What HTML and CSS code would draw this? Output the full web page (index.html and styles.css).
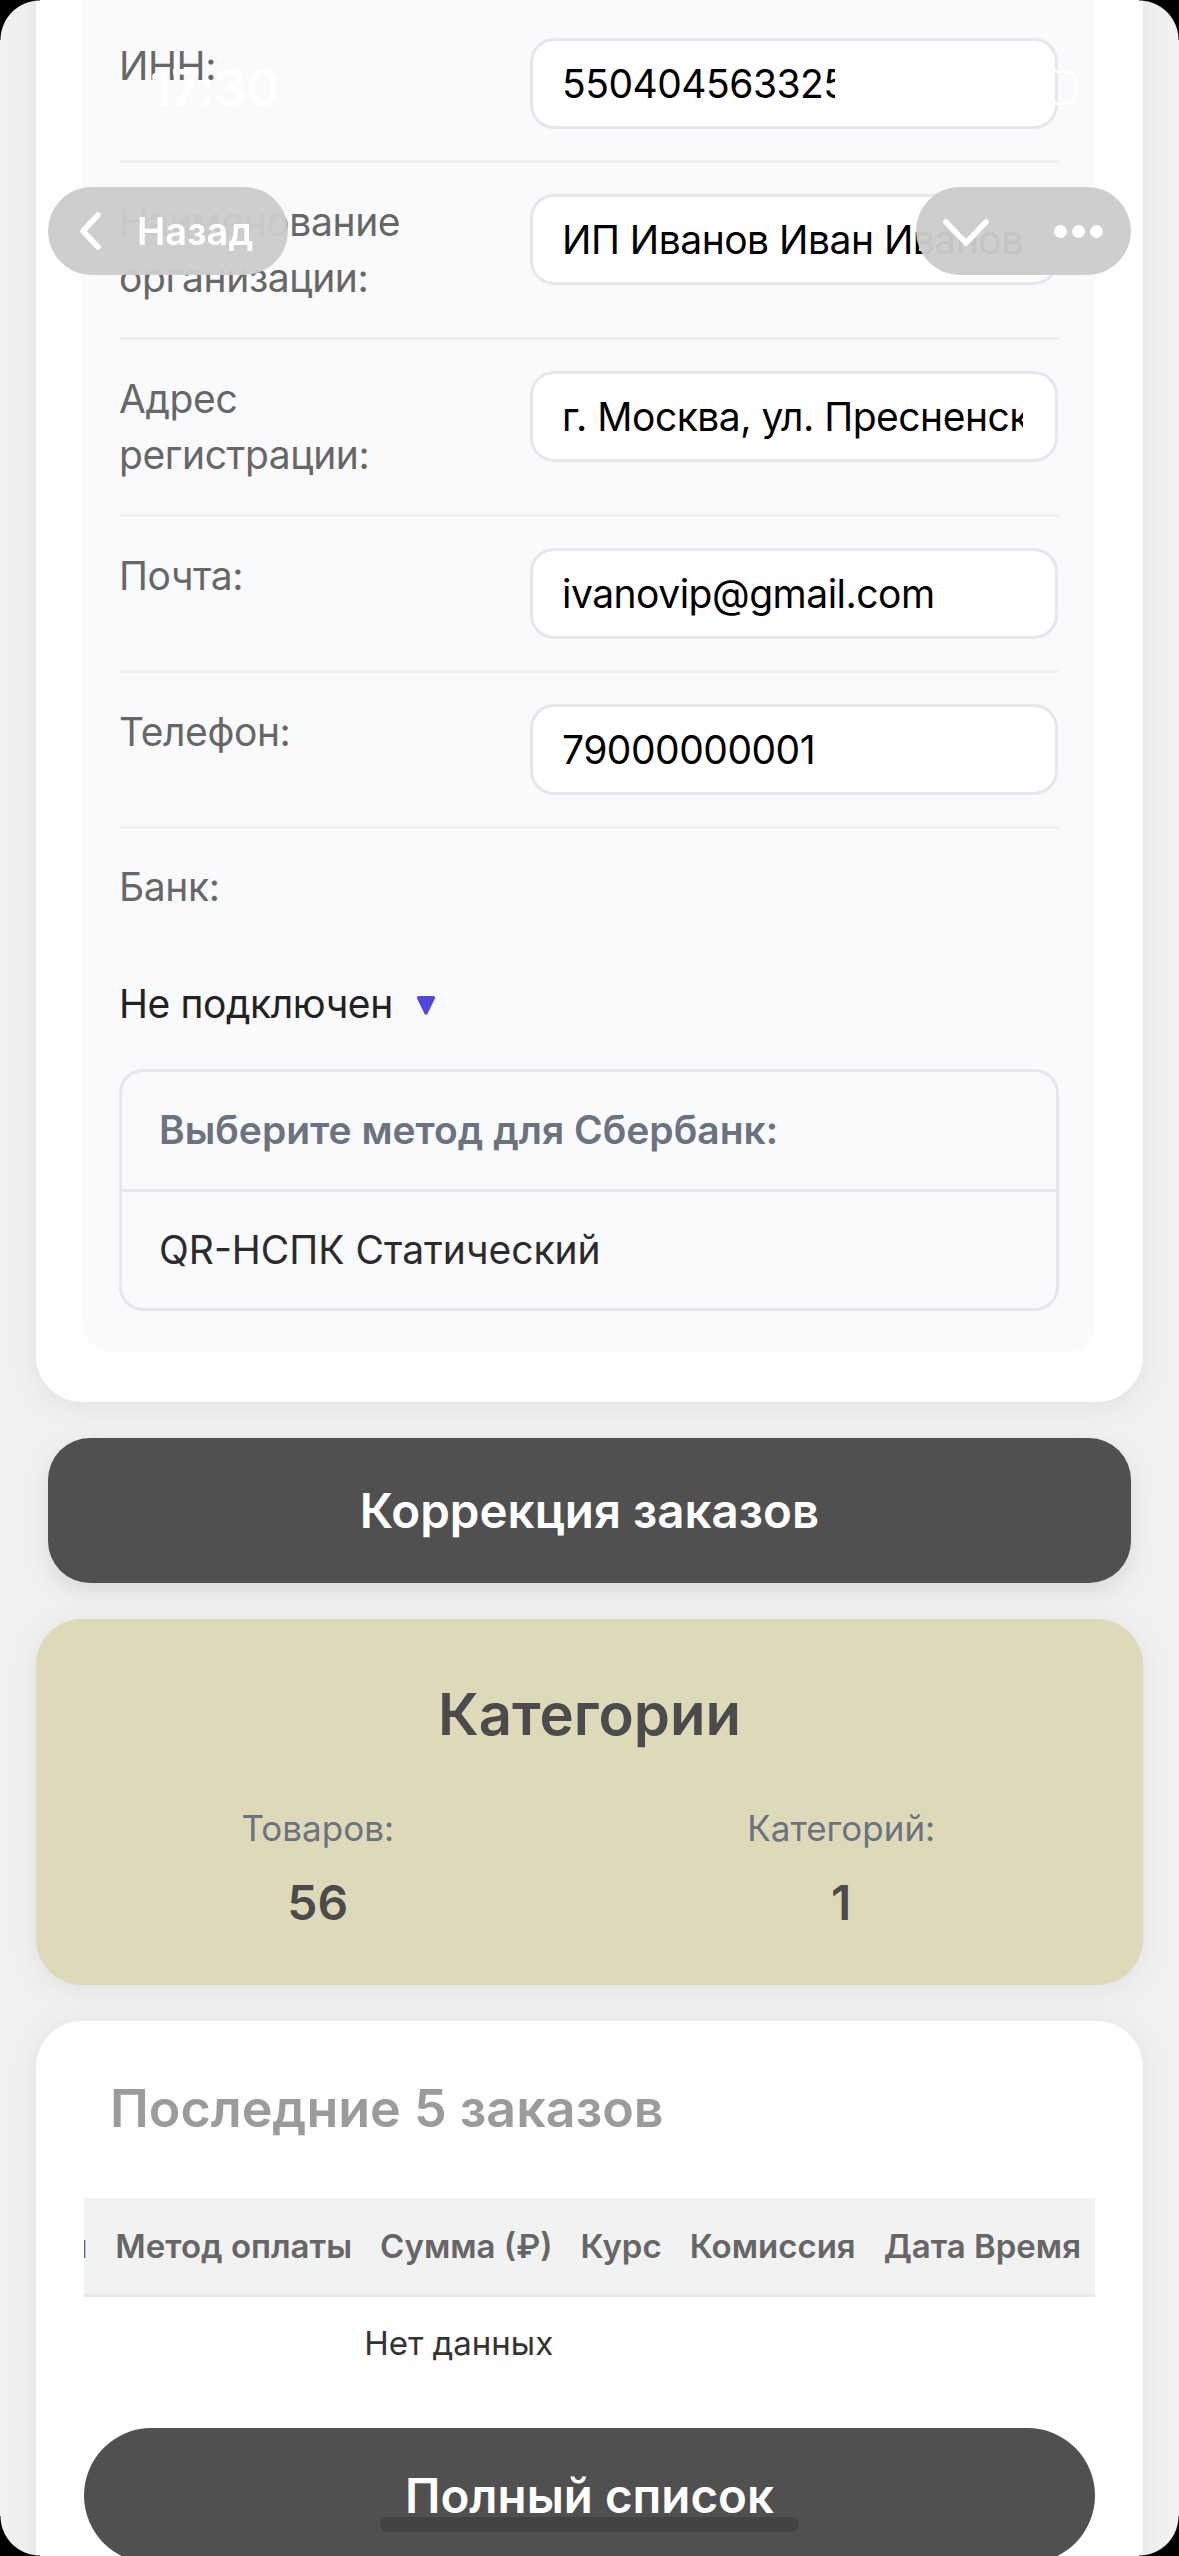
FILE: index.html
```html
<!DOCTYPE html>
<html lang="ru">
<head>
<meta charset="utf-8">
<title>Профиль</title>
<link rel="stylesheet" href="styles.css">
</head>
<body>
<div class="screen">
  <main class="page">
    <section class="card card-form">
      <div class="panel">
        <div class="row">
          <span class="label">ИНН:</span>
          <input class="field field-inn" type="text" value="550404563325" readonly>
        </div>
        <div class="row">
          <span class="label">Наименование организации:</span>
          <input class="field" type="text" value="ИП Иванов Иван Иванович" readonly>
        </div>
        <div class="row">
          <span class="label">Адрес регистрации:</span>
          <input class="field" type="text" value="г. Москва, ул. Пресненская набережная, д. 10" readonly>
        </div>
        <div class="row">
          <span class="label">Почта:</span>
          <input class="field" type="text" value="ivanovip@gmail.com" readonly>
        </div>
        <div class="row">
          <span class="label">Телефон:</span>
          <input class="field" type="text" value="79000000001" readonly>
        </div>
        <div class="bank">
          <div class="label">Банк:</div>
          <div class="bank-status">
            <span>Не подключен</span>
            <svg class="tri" viewBox="0 0 20 21" width="20" height="21"><path d="M2.5 1h15a1.6 1.6 0 0 1 1.4 2.4l-7.5 15.6a1.6 1.6 0 0 1-2.8 0L1.1 3.4A1.6 1.6 0 0 1 2.5 1z" fill="#4f46e5"/></svg>
          </div>
          <div class="methods">
            <div class="methods-head">Выберите метод для Сбербанк:</div>
            <div class="methods-item">QR-НСПК Статический</div>
          </div>
        </div>
      </div>
    </section>

    <button class="btn-dark btn-correction" type="button">Коррекция заказов</button>

    <section class="card card-cats">
      <h2 class="cats-title">Категории</h2>
      <div class="cats-stats">
        <div class="stat">
          <div class="stat-label">Товаров:</div>
          <div class="stat-value">56</div>
        </div>
        <div class="stat">
          <div class="stat-label">Категорий:</div>
          <div class="stat-value">1</div>
        </div>
      </div>
    </section>

    <section class="card card-orders">
      <h2 class="orders-title">Последние 5 заказов</h2>
      <div class="table-wrap">
        <table class="orders-table">
          <thead>
            <tr>
              <th class="col-id">ID</th>
              <th>Магазин</th>
              <th>Метод оплаты</th>
              <th>Сумма (₽)</th>
              <th>Курс</th>
              <th>Комиссия</th>
              <th>Дата Время</th>
            </tr>
          </thead>
          <tbody>
            <tr><td class="empty" colspan="7">Нет данных</td></tr>
          </tbody>
        </table>
      </div>
      <button class="btn-dark btn-full" type="button">Полный список</button>
    </section>
  </main>

  <div class="statusbar">
    <span class="time">17:30</span>
    <span class="battery"><span class="battery-fill"></span></span>
  </div>

  <div class="nav-pill nav-back">
    <svg class="chev-left" viewBox="0 0 24 38" width="24" height="38"><path d="M20 3L5 19l15 16" fill="none" stroke="#fff" stroke-width="5.5" stroke-linecap="round" stroke-linejoin="round"/></svg>
    <span class="nav-back-text">Назад</span>
  </div>
  <div class="nav-pill nav-menu">
    <svg class="chev-down" viewBox="0 0 46 28" width="46" height="28"><path d="M3 3l20 21L43 3" fill="none" stroke="#fff" stroke-width="5.5" stroke-linecap="round" stroke-linejoin="round"/></svg>
    <span class="dots"><i></i><i></i><i></i></span>
  </div>

  <div class="home-indicator"></div>
  <div class="corner corner-tl"></div>
  <div class="corner corner-tr"></div>
  <div class="corner corner-bl"></div>
  <div class="corner corner-br"></div>
</div>
</body>
</html>
```

FILE: styles.css
```css
html, body {
  margin: 0;
  padding: 0;
  height: 2556px;
  overflow: hidden;
}

body {
  background: #f1f1f1;
  font-family: "Inter", "Noto Sans", sans-serif;
  color: #222;
}

.screen {
  position: relative;
  width: 1179px;
  height: 2556px;
  overflow: hidden;
}

.page {
  margin-top: -76px;
  padding: 0 36px;
  display: flex;
  flex-direction: column;
  gap: 36px;
}

.card {
  background: #fefefe;
  border-radius: 46px;
  box-shadow: 0 4px 28px rgba(0, 0, 0, 0.07);
}

/* ---------- form card ---------- */
.card-form {
  padding: 48px 48px 49px 47px;
}

.panel {
  background: #f9fafb;
  border-radius: 30px;
  padding: 35px 36px 42px;
}

.row {
  display: flex;
  align-items: flex-start;
  padding: 31px 0;
  border-bottom: 3px solid #eff0f2;
}

.label {
  width: 362px;
  font-size: 39px;
  line-height: 56px;
  letter-spacing: -0.4px;
  color: #676767;
}

.field {
  margin-left: auto;
  margin-right: 1px;
  width: 528px;
  height: 91px;
  box-sizing: border-box;
  border: 3px solid #e6e7ea;
  border-radius: 24px;
  background: #fff;
  padding: 0 32px 0 29px;
  font-family: "Inter", "Noto Sans", sans-serif;
  font-size: 39px;
  letter-spacing: -0.5px;
  color: #000;
  outline: none;
}

.field-inn {
  padding-right: 220px;
}

.bank {
  padding-top: 30px;
}

.bank-status {
  margin-top: 61px;
  display: flex;
  align-items: center;
  gap: 23px;
  font-size: 39px;
  line-height: 56px;
  letter-spacing: -0.4px;
  color: #222;
}

.tri {
  display: block;
  flex-shrink: 0;
  margin-top: 2px;
}

.methods {
  margin-top: 37px;
  border: 3px solid #e6e7ea;
  border-radius: 24px;
  background: #f9fafb;
}

.methods-head {
  padding: 30px 37px 31px;
  border-bottom: 3px solid #e6e7ea;
  font-size: 39px;
  line-height: 56px;
  font-weight: 600;
  color: #6b7280;
}

.methods-item {
  padding: 30px 37px;
  font-size: 39px;
  line-height: 56px;
  color: #2b2b2b;
}

/* ---------- buttons ---------- */
.btn-dark {
  display: block;
  border: none;
  background: #505050;
  color: #fff;
  font-family: "Inter", "Noto Sans", sans-serif;
  font-weight: 600;
  cursor: pointer;
}

.btn-correction {
  margin: 0 12px;
  height: 145px;
  border-radius: 42px;
  font-size: 47.5px;
  box-shadow: 0 8px 22px rgba(0, 0, 0, 0.1);
}

/* ---------- categories ---------- */
.card-cats {
  background: #dedab9;
  height: 366px;
  box-sizing: border-box;
  padding-top: 60px;
}

.cats-title {
  margin: 0;
  text-align: center;
  font-size: 58px;
  line-height: 70px;
  font-weight: 600;
  color: #4b4b4b;
}

.cats-stats {
  margin-top: 54px;
  padding: 0 40px 0 20px;
  display: grid;
  grid-template-columns: 1fr 1fr;
  text-align: center;
}

.stat-label {
  font-size: 35px;
  line-height: 50px;
  color: #6b7280;
}

.stat-value {
  margin-top: 20px;
  font-size: 48px;
  line-height: 60px;
  font-weight: 600;
  color: #4b4b4b;
}

/* ---------- orders ---------- */
.card-orders {
  padding: 58px 48px 0;
  height: 700px;
  box-sizing: border-box;
}

.orders-title {
  margin: 0 0 0 26px;
  font-size: 52px;
  line-height: 60px;
  font-weight: 600;
  color: #9b9b9b;
}

.table-wrap {
  margin-top: 59px;
  overflow: hidden;
  display: flex;
  justify-content: flex-end;
}

.orders-table {
  flex-shrink: 0;
  border-collapse: collapse;
}

.orders-table th {
  background: #f1f2f2;
  border-bottom: 3px solid #e8e8e8;
  padding: 25px 14px;
  font-size: 33px;
  line-height: 46px;
  font-weight: 600;
  color: #666;
  white-space: nowrap;
  text-align: left;
}

.orders-table th.col-id {
  width: 83px;
}

.orders-table td.empty {
  padding: 24px 0;
  text-align: center;
  font-size: 33px;
  line-height: 44px;
  color: #333;
}

.btn-full {
  margin-top: 39px;
  width: 100%;
  height: 135px;
  border-radius: 68px;
  font-size: 47.5px;
}

/* ---------- overlays ---------- */
.statusbar {
  position: fixed;
  top: 0;
  left: 0;
  right: 0;
  height: 150px;
  pointer-events: none;
}

.time {
  position: absolute;
  left: 150px;
  top: 57px;
  font-size: 51px;
  line-height: 62px;
  font-weight: 600;
  color: #fff;
  letter-spacing: -0.5px;
}

.battery {
  position: absolute;
  left: 1003px;
  top: 70px;
  width: 74px;
  height: 35px;
  box-sizing: border-box;
  border: 3px solid rgba(255, 255, 255, 0.9);
  border-radius: 11px;
  padding: 4px;
}

.battery-fill {
  display: block;
  height: 100%;
  width: 70%;
  background: #fff;
  border-radius: 6px;
}

.nav-pill {
  position: fixed;
  top: 187px;
  height: 88px;
  border-radius: 44px;
  background: rgba(204, 204, 204, 0.96);
  display: flex;
  align-items: center;
  box-sizing: border-box;
}

.nav-back {
  left: 48px;
  width: 240px;
  padding-left: 30px;
}

.chev-left {
  display: block;
  flex-shrink: 0;
}

.nav-back-text {
  margin-left: 35px;
  font-size: 38px;
  font-weight: 600;
  color: #fff;
  line-height: 1;
  white-space: nowrap;
}

.nav-menu {
  left: 916px;
  width: 215px;
  padding-left: 27px;
}

.chev-down {
  display: block;
  flex-shrink: 0;
  margin-top: 4px;
}

.dots {
  margin-left: 65px;
  display: flex;
  gap: 5px;
}

.dots i {
  display: block;
  width: 13px;
  height: 13px;
  border-radius: 50%;
  background: #fff;
}

.home-indicator {
  position: fixed;
  left: 380px;
  bottom: 24px;
  width: 419px;
  height: 15px;
  border-radius: 8px;
  background: #434343;
}

.corner {
  position: fixed;
  width: 40px;
  height: 40px;
}

.corner-tl {
  top: 0;
  left: 0;
  background: radial-gradient(circle at 100% 100%, transparent 39px, #000 40px);
}

.corner-tr {
  top: 0;
  right: 0;
  background: radial-gradient(circle at 0 100%, transparent 39px, #000 40px);
}

.corner-bl {
  bottom: 0;
  left: 0;
  background: radial-gradient(circle at 100% 0, transparent 39px, #000 40px);
}

.corner-br {
  bottom: 0;
  right: 0;
  background: radial-gradient(circle at 0 0, transparent 39px, #000 40px);
}
```
